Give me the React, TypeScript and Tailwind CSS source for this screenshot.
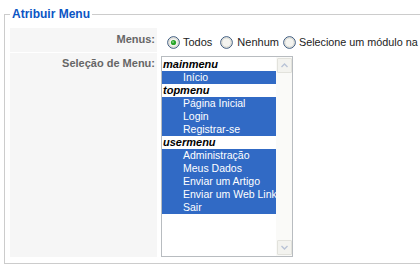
import React from "react";

const Radio = ({ checked }: { checked?: boolean }) => (
  <svg width="13" height="13" viewBox="0 0 13 13" className="shrink-0">
    <circle cx="6.5" cy="6.5" r="5.8" fill="#f4f4f0" stroke="#2c4c74" strokeWidth="1" />
    <circle cx="6.5" cy="6.5" r="4.6" fill="none" stroke="#d8d8d0" strokeWidth="1" />
    {checked && <circle cx="6.5" cy="6.5" r="2.6" fill="#2aa52a" />}
    {checked && <circle cx="6" cy="6" r="1" fill="#7ed07e" />}
  </svg>
);

const Group = ({ label }: { label: string }) => (
  <div className="h-[13px] leading-[13px] pl-[1px] text-[11px] font-bold italic text-black whitespace-nowrap">
    {label}
  </div>
);

const Opt = ({ label }: { label: string }) => (
  <div className="h-[13px] leading-[13px] pl-[21px] text-[10.5px] bg-[#316ac5] text-white whitespace-nowrap overflow-hidden">
    {label}
  </div>
);

const ArrowBtn = ({ up }: { up?: boolean }) => (
  <div className="h-[15px] w-[15px] border border-[#e2e2dc] bg-[#f3f3ef] flex items-center justify-center rounded-[1px]">
    <svg width="7" height="5" viewBox="0 0 7 5">
      <path
        d={up ? "M0.5 4 L3.5 1 L6.5 4" : "M0.5 1 L3.5 4 L6.5 1"}
        fill="none"
        stroke="#b9c3d6"
        strokeWidth="1.4"
      />
    </svg>
  </div>
);

export default function App() {
  return (
    <div className="w-[420px] h-[267px] overflow-hidden bg-white font-['Liberation_Sans',Arial,sans-serif] text-[11px] text-[#333]">
      <fieldset className="ml-[4px] mt-[7px] w-[440px] border border-[#cccccc] px-[5px] pt-[7px] pb-[6px]">
        <legend className="px-[2px] text-[12px] leading-[14px] font-bold text-[#0b55c4]">Atribuir Menu</legend>
        <div className="flex flex-col gap-[1px]">
          <div className="flex gap-[1px] h-[24px]">
            <div className="w-[147px] shrink-0 bg-[#f6f6f6] text-right pr-[2px] pt-[4px] leading-[14px] font-bold text-[#666]">
              Menus:
            </div>
            <div className="flex items-center pt-[4px] pl-[9px] whitespace-nowrap leading-[13px] text-[#222]">
              <Radio checked />
              <span className="ml-[3px]">Todos</span>
              <span className="ml-[8px]">
                <Radio />
              </span>
              <span className="ml-[4px]">Nenhum</span>
              <span className="ml-[4px]">
                <Radio />
              </span>
              <span className="ml-[3px] text-[10.8px]">Selecione um módulo na</span>
              <span className="ml-[3px] inline-block w-[6px] h-[9px] bg-[#fbdca8]"></span>
            </div>
          </div>
          <div className="flex gap-[1px]">
            <div className="w-[147px] shrink-0 bg-[#f6f6f6] text-right pr-[2px] pt-[4px] leading-[13px] font-bold text-[#666]">
              Seleção de Menu:
            </div>
            <div className="pt-[3px] pl-[3px]">
              <div className="w-[132px] h-[201px] border border-[#b8bcc0] flex bg-white">
                <div className="w-[114px] pt-[1px] overflow-hidden">
                  <Group label="mainmenu" />
                  <Opt label="Início" />
                  <Group label="topmenu" />
                  <Opt label="Página Inicial" />
                  <Opt label="Login" />
                  <Opt label="Registrar-se" />
                  <Group label="usermenu" />
                  <Opt label="Administração" />
                  <Opt label="Meus Dados" />
                  <Opt label="Enviar um Artigo" />
                  <Opt label="Enviar um Web Link" />
                  <Opt label="Sair" />
                </div>
                <div className="w-[16px] bg-[#fafaf8] flex flex-col justify-between items-center py-[1px]">
                  <ArrowBtn up />
                  <ArrowBtn />
                </div>
              </div>
            </div>
          </div>
        </div>
      </fieldset>
    </div>
  );
}
